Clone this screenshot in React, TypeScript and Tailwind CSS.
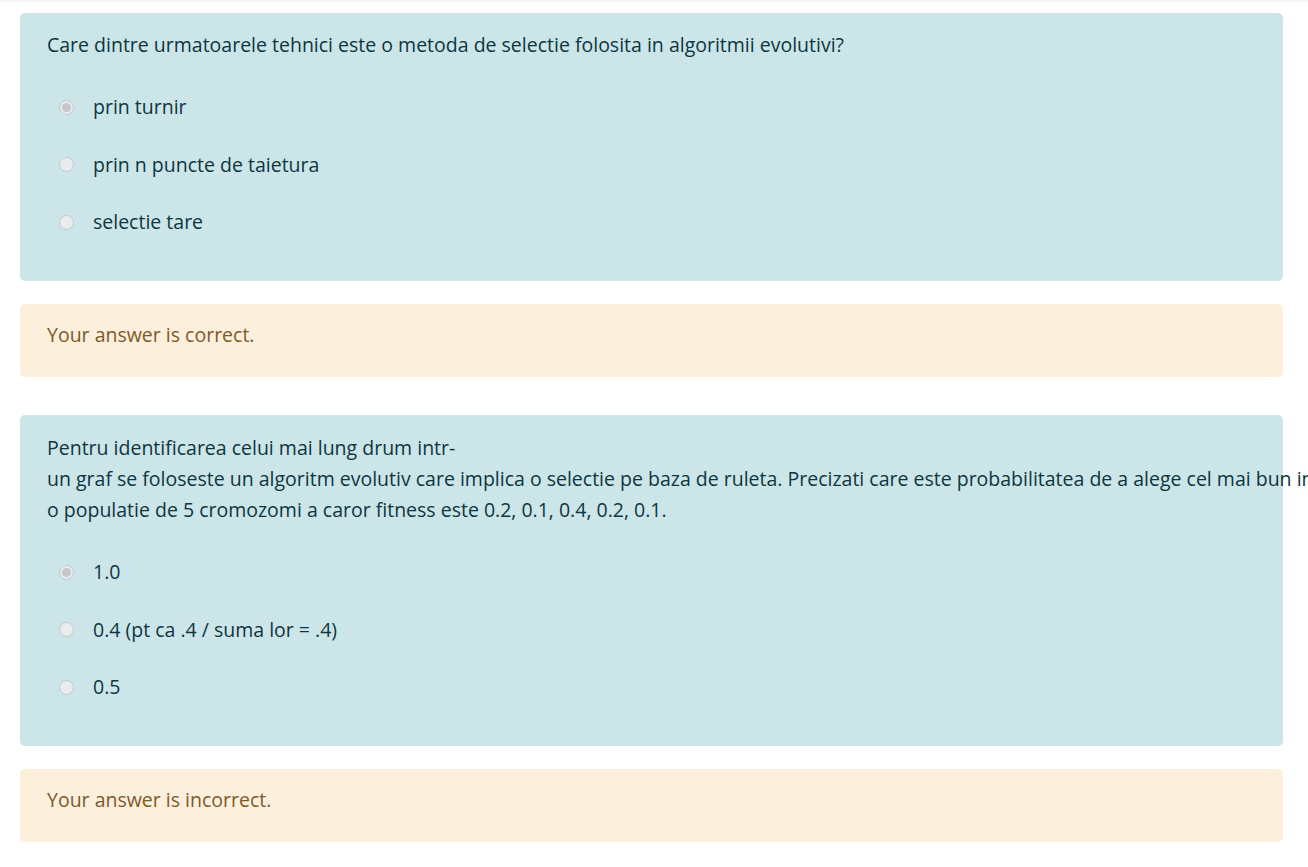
import React from "react";

const font = { fontFamily: '"Open Sans", "Noto Sans", sans-serif' };

function Radio({ checked }: { checked?: boolean }) {
  return (
    <span className="flex h-[15px] w-[15px] shrink-0 items-center justify-center rounded-full border border-[#c4c8ca] bg-[#e8eced]">
      {checked && <span className="h-[9px] w-[9px] rounded-full bg-[#c5c8ca]" />}
    </span>
  );
}

function Option({ label, checked }: { label: string; checked?: boolean }) {
  return (
    <div className="flex h-[30px] items-center pl-[12px]">
      <Radio checked={checked} />
      <span className="ml-[19px] whitespace-nowrap">{label}</span>
    </div>
  );
}

function Question({ children, options }: { children: React.ReactNode; options: { label: string; checked?: boolean }[] }) {
  return (
    <div className="rounded-[5px] bg-[#cce5e9] pt-[17px] pb-[44px] pl-[27px] pr-[27px] text-[#0e3640]">
      <div>{children}</div>
      <div className="mt-[32px] flex flex-col gap-[27.5px]">
        {options.map((o) => (
          <Option key={o.label} label={o.label} checked={o.checked} />
        ))}
      </div>
    </div>
  );
}

function Feedback({ text }: { text: string }) {
  return (
    <div className="rounded-[5px] bg-[#fcefdc] pt-[16px] pb-[27px] pl-[27px] text-[#7d5a29]">{text}</div>
  );
}

export default function App() {
  return (
    <div className="h-[867px] w-full overflow-hidden bg-white" style={font}>
      <div className="h-[3px] bg-gradient-to-b from-[#f2f2f2] to-white" />
      <div className="pl-[20px] pr-[25px] pt-[10px] text-[19.5px] leading-[30px]">
        <Question
          options={[
            { label: "prin turnir", checked: true },
            { label: "prin n puncte de taietura" },
            { label: "selectie tare" },
          ]}
        >
          Care dintre urmatoarele tehnici este o metoda de selectie folosita in algoritmii evolutivi?
        </Question>
        <div className="mt-[23px]">
          <Feedback text="Your answer is correct." />
        </div>
        <div className="mt-[38px]">
          <Question
            options={[
              { label: "1.0", checked: true },
              { label: "0.4 (pt ca .4 / suma lor = .4)" },
              { label: "0.5" },
            ]}
          >
            <div className="leading-[31px]">
              <div>Pentru identificarea celui mai lung drum intr-</div>
              <div className="whitespace-nowrap">
                un graf se foloseste un algoritm evolutiv care implica o selectie pe baza de ruleta. Precizati care este probabilitatea de a alege cel mai bun individ dintr-
              </div>
              <div>o populatie de 5 cromozomi a caror fitness este 0.2, 0.1, 0.4, 0.2, 0.1.</div>
            </div>
          </Question>
        </div>
        <div className="mt-[23px]">
          <Feedback text="Your answer is incorrect." />
        </div>
      </div>
    </div>
  );
}
